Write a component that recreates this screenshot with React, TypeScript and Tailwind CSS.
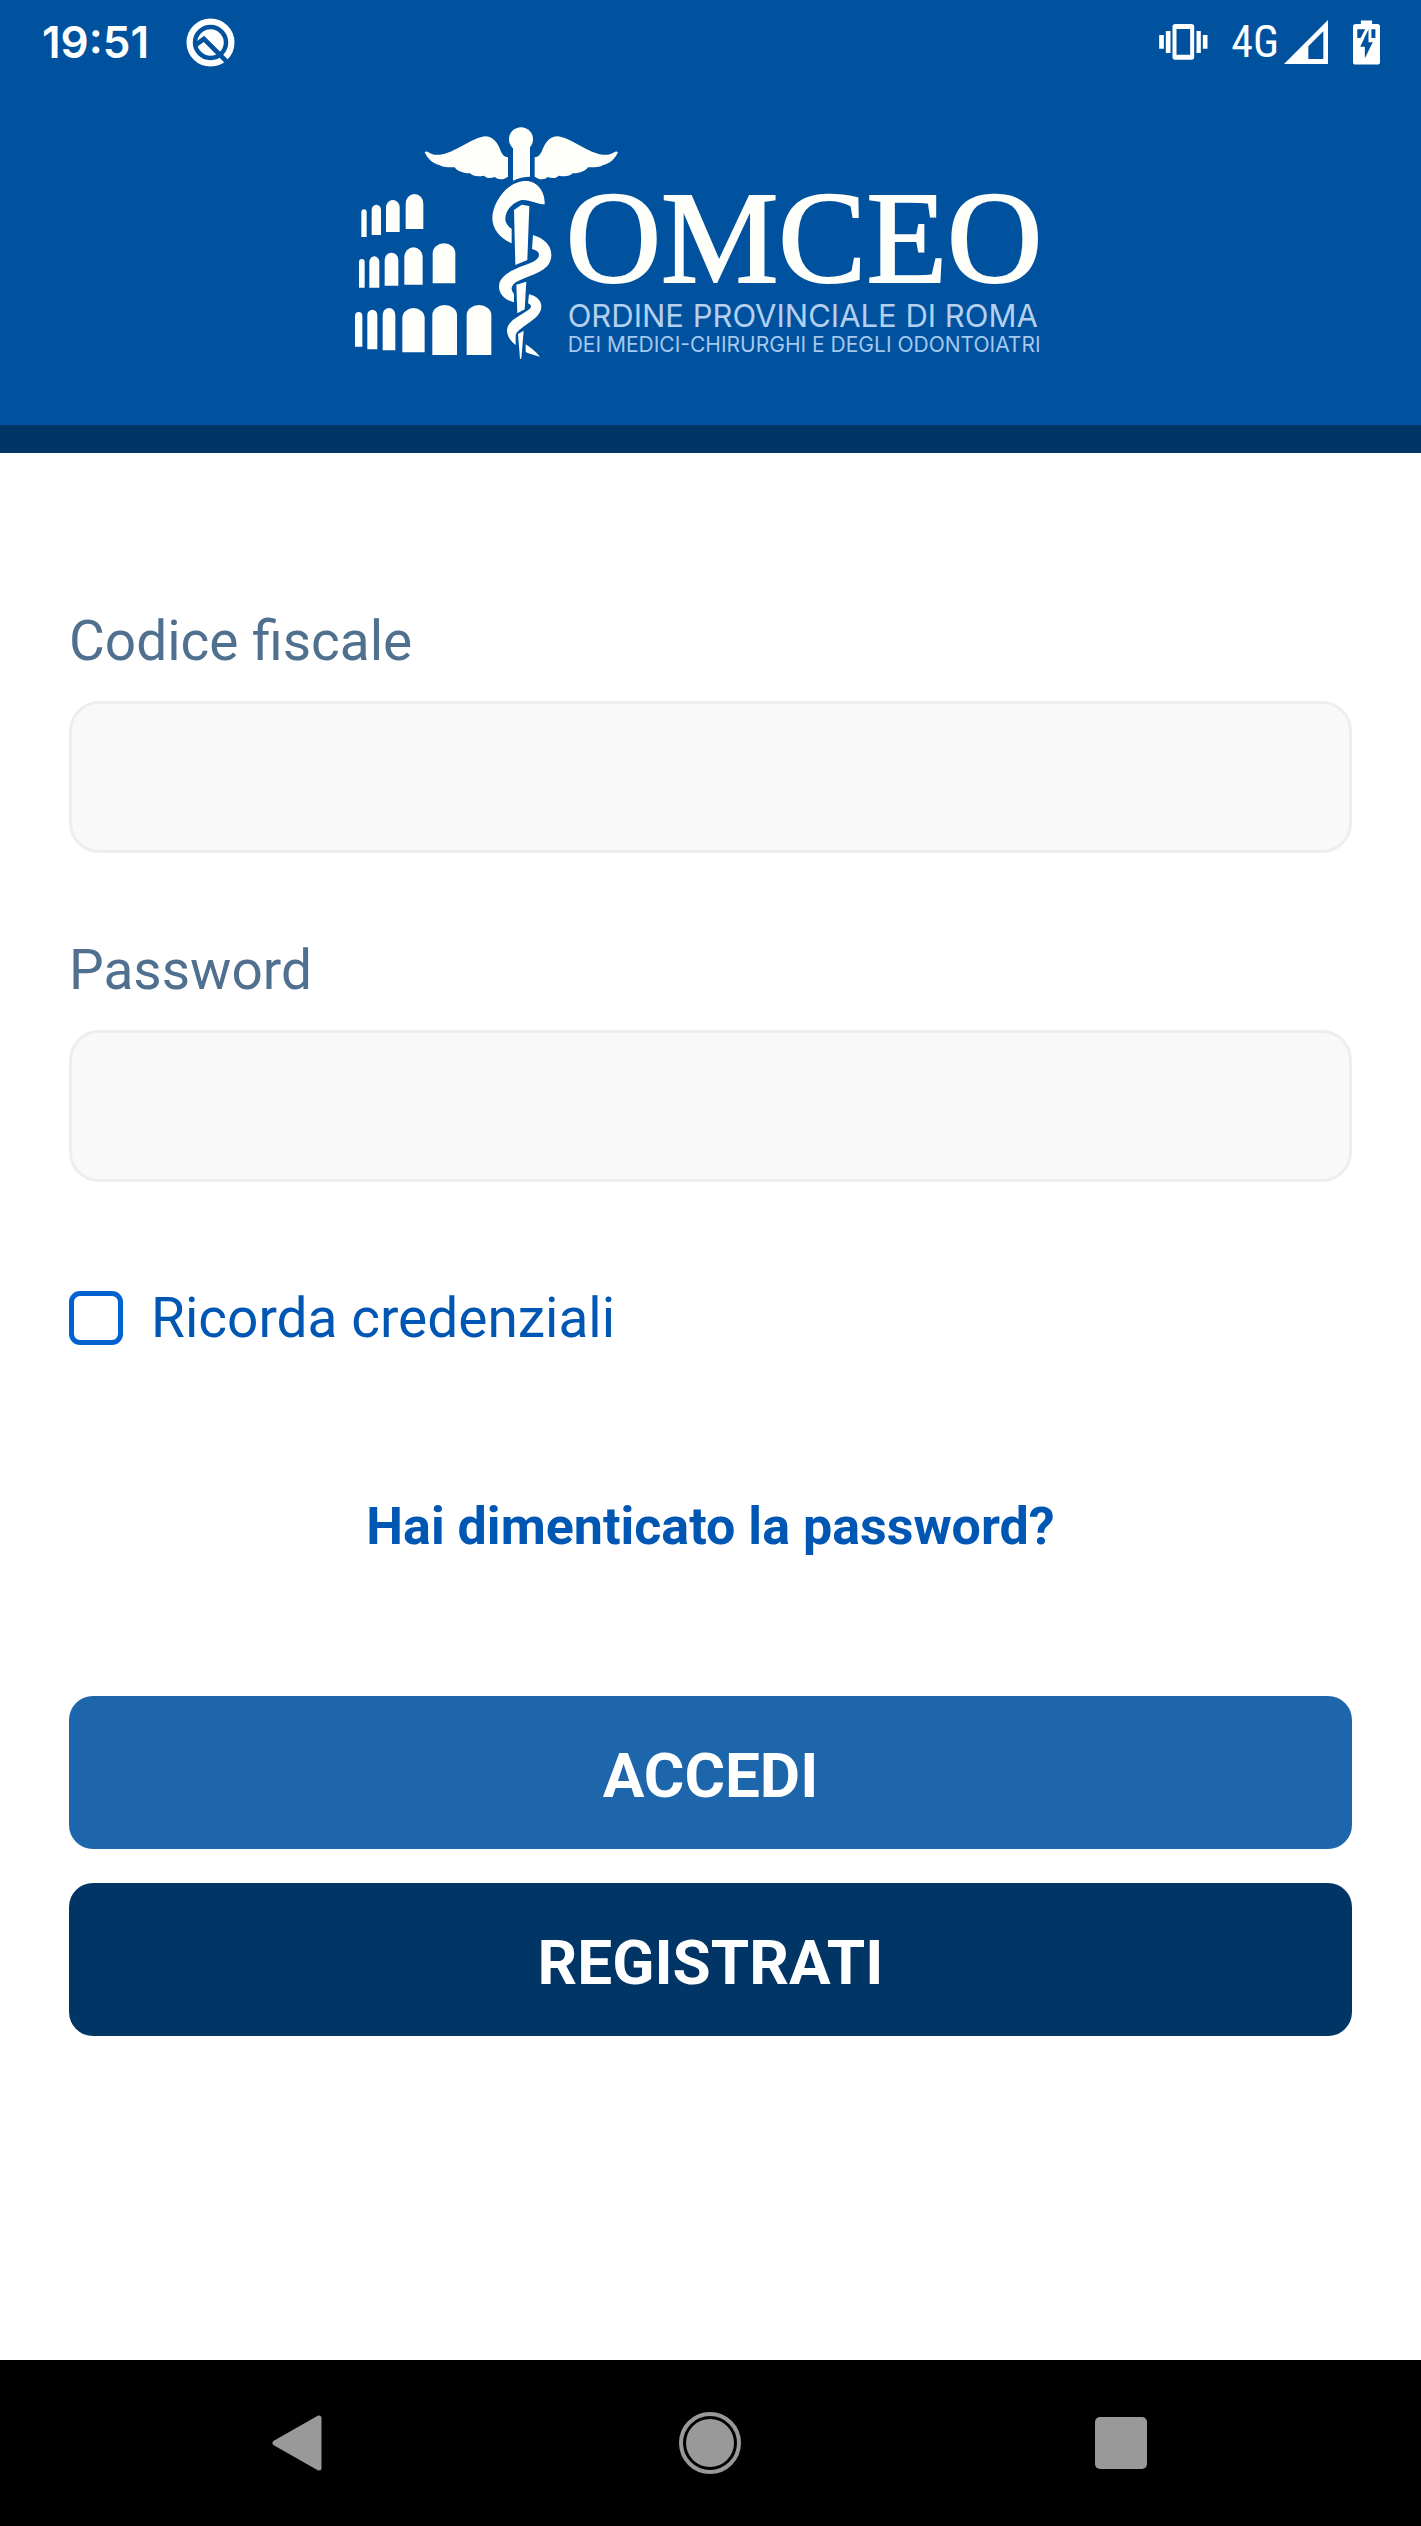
import React from "react";

type Arch = [left: number, top: number, right: number, bottom: number];

const ARCHES: Arch[] = [
  [64, 298, 80, 381], [95, 284, 123, 375], [138, 270, 179, 366], [197, 252, 250, 357],
  [57, 447, 74, 533], [88, 439, 118, 533], [134, 428, 175, 527], [193, 412, 248, 524], [278, 400, 346, 520],
  [45, 606, 67, 710], [82, 599, 112, 718], [128, 594, 166, 721], [187, 594, 254, 727], [277, 585, 351, 735], [380, 585, 454, 735],
];

function archPath([l, t, r, b]: Arch) {
  const rx = (r - l) / 2;
  const ry = Math.min(rx * 1.1, 30);
  return `M${l} ${b}V${t + ry}A${rx} ${ry} 0 0 1 ${r} ${t + ry}V${b}Z`;
}

const WING =
  "M254 127C262 120 266 132 283 134C330 140 380 92 424 81C442 74 458 82 470 98C484 118 482 139 504 142V200C490 210 474 210 465 201C452 205 440 206 432 197C415 201 398 199 390 190C372 190 352 184 344 172C325 172 308 172 300 166C280 162 262 146 254 127Z";

function Emblem() {
  return (
    <svg viewBox="42 48 636 702" className="h-[234px] w-[212px] shrink-0 overflow-visible" fill="#fefefa" aria-hidden="true">
      {ARCHES.map((a) => (
        <path key={a.join()} d={archPath(a)} />
      ))}
      <path d={WING} />
      <path d={WING} transform="translate(1088 0) scale(-1 1)" />
      <circle cx="543" cy="88" r="36" />
      <path d="M519 110H570V200C552 200 536 204 519 212Z" />
      <path d="M515 400C480 385 457 357 457 325C457 280 500 213 558 213C592 213 616 245 614 283C595 284 570 268 545 270C518 278 496 300 496 327C496 340 505 350 515 356Z" />
      <path d="M522 300L545 284L568 288L562 450L526 465Z" />
      <path d="M579 375C612 385 634 405 634 435C634 475 595 488 560 502C530 514 514 522 515 538C516 545 520 548 522 552V577C500 572 477 555 477 530C477 500 510 483 545 469C575 458 597 450 597 435C597 425 588 420 576 417Z" />
      <path d="M529 524L559 515L554 598L532 610Z" />
      <path d="M567 553C590 558 604 572 604 590C604 615 575 632 550 650C538 660 528 666 527 677V705C508 690 501 675 501 660C503 635 530 622 552 608C564 600 572 596 573 590C573 584 568 582 564 580Z" />
      <path d="M534 672L551 662L544 746H540Z" />
      <path d="M557 703C570 712 585 722 600 740C585 736 570 732 557 726Z" />
    </svg>
  );
}

function AndroidQIcon() {
  return (
    <svg viewBox="558 50 148 148" className="size-[49px]" aria-hidden="true">
      <circle cx="632" cy="124" r="63" fill="none" stroke="#fff" strokeWidth="19" />
      <circle cx="632" cy="124" r="40" fill="#fff" />
      <path d="M584 134L612 113L694 195" fill="none" stroke="#00529f" strokeWidth="14" />
    </svg>
  );
}

function VibrateIcon() {
  return (
    <svg viewBox="115 69 146 108" className="h-[36px] w-[49px]" fill="#fff" aria-hidden="true">
      <path fillRule="evenodd" d="M163 69H212Q220 69 220 77V168Q220 176 212 176H163Q155 176 155 168V77Q155 69 163 69ZM167 84V161H208V84Z" />
      <path d="M115 102H129V143H115ZM135 90H149V156H135ZM227 90H240V156H227ZM246 102H260V143H246Z" />
    </svg>
  );
}

function SignalIcon() {
  return (
    <svg viewBox="489 57 132 132" className="size-[44px]" fill="#fff" aria-hidden="true">
      <path fillRule="evenodd" d="M489 189L621 57V189ZM562 174H607V91L562 136Z" />
    </svg>
  );
}

function BatteryIcon() {
  return (
    <svg viewBox="695 57 82 134" className="h-[45px] w-[27px]" aria-hidden="true">
      <path fill="#fff" d="M719 57H753V68H769Q777 68 777 76V183Q777 191 769 191H703Q695 191 695 183V76Q695 68 703 68H719Z" />
      <path fill="#00529f" d="M708 84H732L718 110H708ZM751 84H763V110H751Z" />
      <path fill="#00529f" d="M742 84V123H755L731 172V137H717Z" />
    </svg>
  );
}

function StatusBar() {
  return (
    <div className="flex h-[84px] items-center justify-between pr-[41px] pl-[42px] text-white">
      <div className="flex items-center gap-[37px]">
        <span className="font-['Inter',sans-serif] text-[44px] leading-[48px] font-semibold">19:51</span>
        <AndroidQIcon />
      </div>
      <div className="flex items-center">
        <VibrateIcon />
        <span className="mr-[5px] ml-[23px] font-['Roboto_Condensed','Roboto',sans-serif] text-[44px] leading-[48px]">4G</span>
        <SignalIcon />
        <span className="ml-[25px]">
          <BatteryIcon />
        </span>
      </div>
    </div>
  );
}

function Logo() {
  return (
    <div className="flex justify-center pr-[25px]">
      <Emblem />
      <div className="flex flex-col text-[#fefefa]">
        <span className="mt-[50px] font-['Liberation_Serif',serif] text-[132px] leading-[124px] [-webkit-text-stroke:2px_#fefefa]">OMCEO</span>
        <span className="pl-[2px] font-['Inter',sans-serif] text-[31px] leading-[32px] text-[#b4d0ee]">ORDINE PROVINCIALE DI ROMA</span>
        <span className="pl-[2px] font-['Inter',sans-serif] text-[21px] leading-[26px] text-[#a5c8ee]">DEI MEDICI-CHIRURGHI E DEGLI ODONTOIATRI</span>
      </div>
    </div>
  );
}

function Field({ id, label, type }: { id: string; label: string; type: string }) {
  return (
    <div className="flex flex-col gap-[28px]">
      <label htmlFor={id} className="text-[55px] leading-[64px] text-[#50708f]">
        {label}
      </label>
      <input
        id={id}
        type={type}
        className="h-[152px] w-full rounded-[30px] border-[3px] border-[#eeeeee] bg-[#f9f9f9] px-10 text-[55px] outline-none"
      />
    </div>
  );
}

function NavBar() {
  return (
    <nav className="grid h-[166px] grid-cols-3 place-items-center bg-black px-[95px]">
      <button type="button" aria-label="Indietro">
        <svg viewBox="0 0 56 56" className="size-[56px]" aria-hidden="true">
          <path d="M3 28L47 3V53Z" fill="#999" stroke="#999" strokeWidth="5" strokeLinejoin="round" />
        </svg>
      </button>
      <button type="button" aria-label="Home">
        <svg viewBox="0 0 64 64" className="size-[64px]" aria-hidden="true">
          <circle cx="32" cy="32" r="29" fill="none" stroke="#999" strokeWidth="4" />
          <circle cx="32" cy="32" r="24" fill="#999" />
        </svg>
      </button>
      <button type="button" aria-label="Recenti" className="size-[52px] rounded-[5px] bg-[#999]" />
    </nav>
  );
}

export default function App() {
  return (
    <div className="flex min-h-screen flex-col bg-white font-['Roboto',sans-serif]">
      <header className="border-b-[28px] border-[#003566] bg-[#00529f] pb-[65px]">
        <StatusBar />
        <div className="pt-[42px]">
          <Logo />
        </div>
      </header>
      <main className="grow px-[69px] pt-[156px]">
        <form className="flex flex-col" onSubmit={(e) => e.preventDefault()}>
          <div className="flex flex-col gap-[85px]">
            <Field id="codice-fiscale" label="Codice fiscale" type="text" />
            <Field id="password" label="Password" type="password" />
          </div>
          <label className="mt-[104px] flex items-center gap-[28px] self-start text-[55px] leading-[64px] text-[#0057b3]">
            <input type="checkbox" className="size-[54px] appearance-none rounded-[11px] border-[5px] border-[#0062d1] bg-white checked:bg-[#0062d1]" />
            Ricorda credenziali
          </label>
          <a href="#recupero" className="mt-[145px] self-center text-[52px] leading-[64px] font-bold text-[#0057b3]">
            Hai dimenticato la password?
          </a>
          <div className="mt-[137px] flex flex-col gap-[34px] text-[62px] leading-[72px] font-bold text-white">
            <button type="submit" className="h-[153px] rounded-[24px] bg-[#1e66ab] pt-[6px]">ACCEDI</button>
            <button type="button" className="h-[153px] rounded-[24px] bg-[#003566] pt-[6px]">REGISTRATI</button>
          </div>
        </form>
      </main>
      <NavBar />
    </div>
  );
}
